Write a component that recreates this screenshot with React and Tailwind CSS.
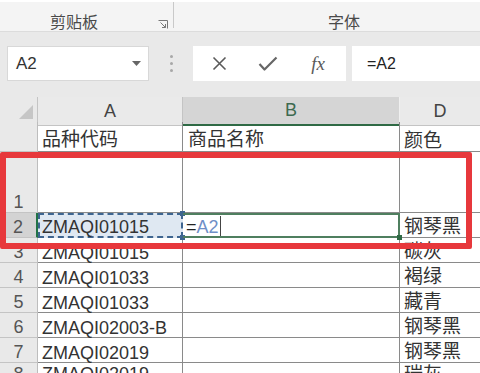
import React from "react";

const rows = [
  { n: "", h: "h-[30px]", a: "品种代码", b: "商品名称", d: "颜色" },
  { n: "1", h: "h-[61px]", a: "", d: "" },
  { n: "2", h: "h-[25px]", a: "ZMAQI01015", d: "钢琴黑", active: true },
  { n: "3", h: "h-[25px]", a: "ZMAQI01015", d: "碳灰" },
  { n: "4", h: "h-[25px]", a: "ZMAQI01033", d: "褐绿" },
  { n: "5", h: "h-[25px]", a: "ZMAQI01033", d: "藏青" },
  { n: "6", h: "h-[25px]", a: "ZMAQI02003-B", d: "钢琴黑" },
  { n: "7", h: "h-[25px]", a: "ZMAQI02019", d: "钢琴黑" },
  { n: "8", h: "h-[25px]", a: "ZMAQI02019", d: "瑞灰", top: true },
];

function Launcher() {
  return (
    <svg width="10" height="9" viewBox="0 0 10 9" className="text-[#777]">
      <path d="M0.5 0.5h9v8" fill="none" stroke="currentColor" strokeWidth="1" />
      <path d="M2.5 2.5l5 5M7.5 4v3.5H4" fill="none" stroke="currentColor" strokeWidth="1" />
    </svg>
  );
}

function Row({ r }) {
  const align = r.top ? "items-start pt-[2px]" : "items-end";
  return (
    <div className={`grid grid-cols-[38px_145px_217px_80px] ${r.h}`}>
      <div
        className={`flex justify-center ${align} border-b border-[#c4c4c4] text-[18px] leading-none text-[#555] ${
          r.active ? "bg-[#d3d3d3] border-r-2 border-r-[#217346]" : "bg-[#e9e9e9] border-r border-r-[#bdbdbd]"
        }`}
      >
        <span className="pb-[1px]">{r.n}</span>
      </div>
      {r.active ? (
        <div className={`relative flex ${align} bg-[#dfe8f2] border-2 border-dashed border-[#3e6590] px-[2px] text-[18px] leading-none text-[#333]`}>
          <span>{r.a}</span>
          <span className="absolute -right-[4px] -top-[4px] w-[5px] h-[5px] bg-[#3e6590]" />
          <span className="absolute -right-[4px] -bottom-[4px] w-[5px] h-[5px] bg-[#3e6590]" />
        </div>
      ) : (
        <div className={`flex ${align} border-b border-r border-[#8a8a8a] px-[4px] text-[18px] leading-none text-[#333] whitespace-nowrap`}>
          <span className={r.n === "" ? "text-[19px] pb-[2px]" : ""}>{r.a}</span>
        </div>
      )}
      {r.active ? (
        <div className={`relative flex ${align} border-y-2 border-r-2 border-[#4f7f5f] px-[3px] text-[18px] leading-none`}>
          <span className="text-[#222]">=</span>
          <span className="text-[#6f8fc7]">A2</span>
          <span className="ml-[1px] w-px h-[20px] bg-[#444]" />
          <span className="absolute -right-[4px] -bottom-[4px] w-[5px] h-[5px] bg-[#2f6a45]" />
        </div>
      ) : (
        <div className={`flex ${align} border-b border-r border-[#8a8a8a] px-[5px] text-[19px] leading-none text-[#333]`}>
          <span className="pb-[2px]">{r.b}</span>
        </div>
      )}
      <div className={`flex ${align} border-b border-[#8a8a8a] px-[4px] text-[19px] leading-none text-[#333] whitespace-nowrap`}>
        <span className="pb-[1px]">{r.d}</span>
      </div>
    </div>
  );
}

export default function App() {
  return (
    <div className="w-[480px] h-[373px] overflow-hidden bg-[#e9e9e9] font-['Liberation_Sans','Noto_Sans_CJK_SC',sans-serif]">
      {/* ribbon group labels */}
      <div className="h-[32px] bg-[#f4f4f4] border-t-2 border-white border-b border-b-[#dcdcdc] flex">
        <div className="w-[174px] h-[26px] border-r border-[#c9c9c9] flex items-end pl-[50px] pr-[5px]">
          <span className="text-[16px] leading-none text-[#4a4a4a] -mb-[3px]">剪贴板</span>
          <span className="ml-auto -mb-[1px]">
            <Launcher />
          </span>
        </div>
        <div className="flex-1 h-[26px] flex items-end pl-[154px]">
          <span className="text-[16px] leading-none text-[#4a4a4a] -mb-[3px]">字体</span>
        </div>
      </div>

      {/* formula bar */}
      <div className="h-[65px] pt-[14px] flex items-start">
        <div className="ml-[7px] w-[142px] h-[35px] bg-white border border-[#d8d8d8] flex items-center pl-[8px] pr-[7px]">
          <span className="text-[17px] text-[#333]">A2</span>
          <svg width="9" height="5" viewBox="0 0 9 5" className="ml-auto">
            <path d="M0 0h9L4.5 5z" fill="#666" />
          </svg>
        </div>
        <div className="w-[44px] h-[35px] flex flex-col items-center justify-center gap-[4px]">
          <span className="w-[3px] h-[3px] rounded-full bg-[#a8a8a8]" />
          <span className="w-[3px] h-[3px] rounded-full bg-[#a8a8a8]" />
          <span className="w-[3px] h-[3px] rounded-full bg-[#a8a8a8]" />
        </div>
        <div className="w-[153px] h-[35px] bg-white flex items-center">
          <div className="w-[50px] flex justify-center pl-[2px]">
            <svg width="15" height="15" viewBox="0 0 15 15">
              <path d="M1.5 1.5l12 12M13.5 1.5l-12 12" stroke="#5a5a5a" strokeWidth="1.6" fill="none" />
            </svg>
          </div>
          <div className="w-[50px] flex justify-center">
            <svg width="20" height="15" viewBox="0 0 20 15">
              <path d="M1.5 8l5 5.5L18.5 1.5" stroke="#666" strokeWidth="2.2" fill="none" strokeLinejoin="round" />
            </svg>
          </div>
          <div className="w-[50px] flex justify-center">
            <span className="font-['Liberation_Serif',serif] italic text-[19px] text-[#5a5a5a] leading-none">fx</span>
          </div>
        </div>
        <div className="ml-[6px] flex-1 h-[35px] bg-white flex items-center pl-[15px]">
          <span className="text-[16px] text-[#222]">=A2</span>
        </div>
      </div>

      {/* sheet */}
      <div className="relative bg-white">
        <div className="grid grid-cols-[38px_145px_217px_80px] h-[25px]">
          <div className="bg-[#e9e9e9] border-r border-b border-[#c4c4c4] flex items-end justify-end pr-[4px] pb-[6px]">
            <svg width="14" height="14" viewBox="0 0 14 14">
              <path d="M14 0v14H0z" fill="#c6c6c6" />
            </svg>
          </div>
          <div className="bg-[#eaeaea] border-r border-b border-[#c4c4c4] flex items-center justify-center text-[18px] text-[#444]">A</div>
          <div className="bg-[#d5d5d5] border-r border-r-[#f0f0f0] border-b-2 border-b-[#2f6a45] flex items-center justify-center text-[18px] text-[#3d6a50]">B</div>
          <div className="bg-[#eaeaea] border-b border-[#c4c4c4] flex items-center justify-center text-[18px] text-[#444]">D</div>
        </div>
        {rows.map((r, i) => (
          <Row key={i} r={r} />
        ))}
        <div className="absolute left-0 top-[55px] w-[472px] h-[97px] border-[6px] border-[#e7383c] rounded-[2px]" />
      </div>
    </div>
  );
}
